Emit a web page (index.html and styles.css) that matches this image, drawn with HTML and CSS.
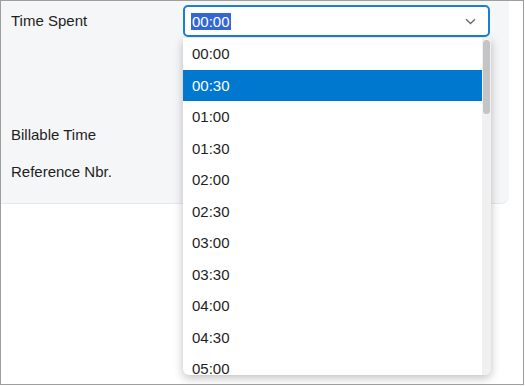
FILE: index.html
```html
<!DOCTYPE html>
<html lang="en">
<head>
    <meta charset="UTF-8">
    <title>Time Entry</title>
    <link rel="stylesheet" href="styles.css">
</head>
<body>
    <div class="frame">
        <div class="panel">
            <div class="field field-tall">
                <div class="label">Time Spent</div>
                <div class="select">
                    <span class="picked">00:00</span>
                    <svg class="chevron" width="11" height="7" viewBox="0 0 11 7">
                        <path d="M1 1.2 L5.5 5.5 L10 1.2" fill="none" stroke="#6b6b6b" stroke-width="1.3"/>
                    </svg>
                </div>
            </div>
            <div class="field">
                <div class="label">Billable Time</div>
            </div>
            <div class="field">
                <div class="label">Reference Nbr.</div>
            </div>
        </div>

        <div class="dropdown">
            <ul class="options">
                <li>00:00</li>
                <li class="active">00:30</li>
                <li>01:00</li>
                <li>01:30</li>
                <li>02:00</li>
                <li>02:30</li>
                <li>03:00</li>
                <li>03:30</li>
                <li>04:00</li>
                <li>04:30</li>
                <li>05:00</li>
            </ul>
            <div class="scrollbar">
                <div class="thumb"></div>
            </div>
        </div>
    </div>
</body>
</html>
```

FILE: styles.css
```css
body {
    margin: 0;
    font-family: "Liberation Sans", Arial, sans-serif;
    font-size: 15px;
    color: #1e1e1e;
    background: #fff;
}

.frame {
    position: relative;
    width: 524px;
    height: 385px;
    box-sizing: border-box;
    border: 1px solid #9e9e9e;
    overflow: hidden;
}

.panel {
    width: 508px;
    height: 203px;
    box-sizing: border-box;
    padding: 4px 0 0 10px;
    background: #f5f6f8;
    border-bottom: 1px solid #e6e8eb;
    border-bottom-right-radius: 8px;
    display: flex;
    flex-direction: column;
    gap: 5px;
}

.field {
    display: flex;
    align-items: flex-start;
    height: 32px;
}

.field-tall {
    height: 109px;
}

.label {
    width: 172px;
    line-height: 32px;
}

.select {
    width: 307px;
    height: 32px;
    box-sizing: border-box;
    border: 2px solid #1a7fd4;
    border-radius: 5px;
    background: #fff;
    display: flex;
    align-items: center;
    justify-content: space-between;
    padding: 0 12px 0 6px;
}

.picked {
    background: #3367d1;
    color: #fff;
    line-height: 17px;
    padding: 0 1px;
}

.chevron {
    margin-top: 1px;
}

.dropdown {
    position: absolute;
    left: 182px;
    top: 37px;
    width: 308px;
    height: 337px;
    background: #fff;
    border-radius: 0 0 6px 6px;
    box-shadow: 0 3px 10px rgba(0, 0, 0, 0.25);
    overflow: hidden;
    display: flex;
}

.options {
    list-style: none;
    margin: 0;
    padding: 0;
    flex: 1;
}

.options li {
    height: 31.5px;
    line-height: 31.5px;
    padding-left: 9px;
}

.options li.active {
    background: #0078d0;
    color: #fff;
}

.scrollbar {
    width: 9px;
    background: #f0f0f0;
    padding: 2px 1px 0;
    box-sizing: border-box;
}

.thumb {
    height: 74px;
    background: #c4c4c4;
    border-radius: 4px;
}
```
